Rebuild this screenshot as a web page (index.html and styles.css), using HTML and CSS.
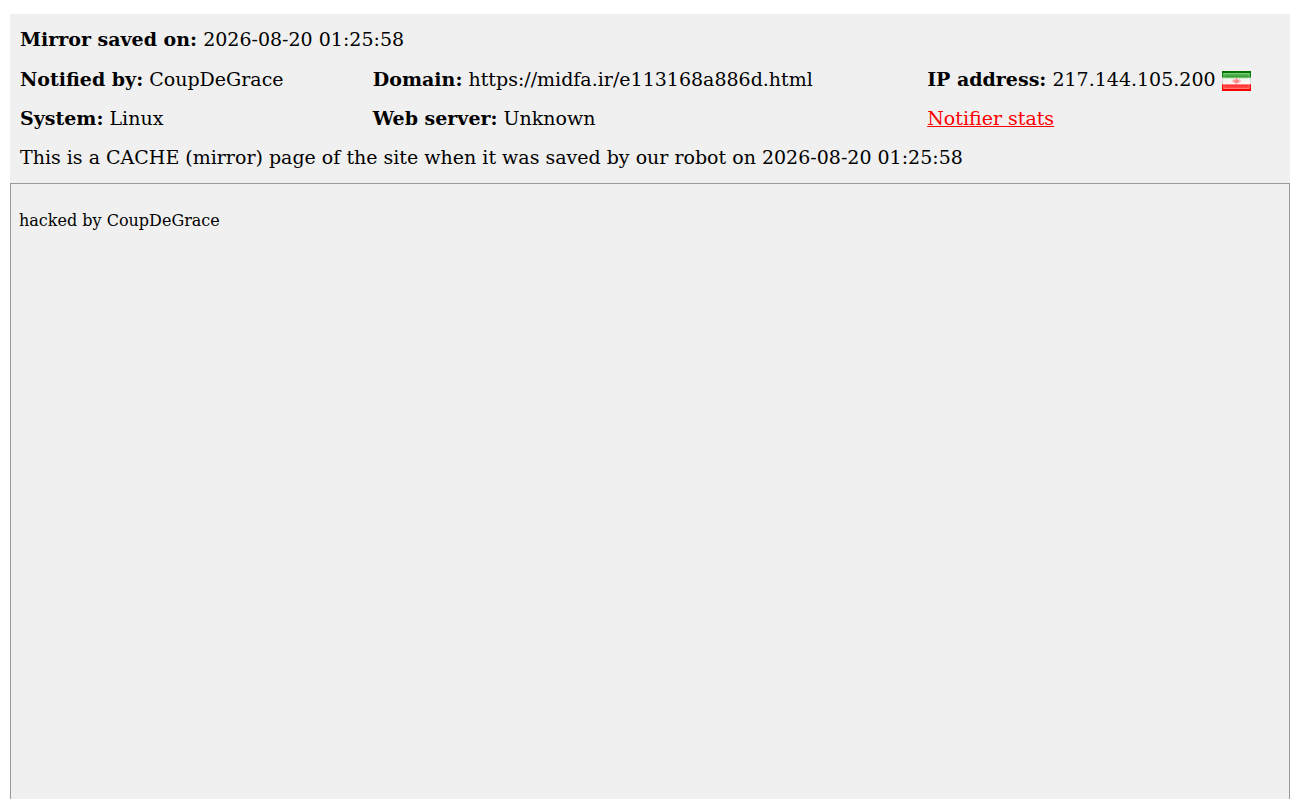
FILE: index.html
```html
<!DOCTYPE html>
<html lang="en">
<head>
<meta charset="utf-8">
<title>Mirror saved on: 2026-08-20 01:25:58</title>
<link rel="stylesheet" href="styles.css">
</head>
<body>
<header class="info">
  <p class="row wide saved"><strong>Mirror saved on:</strong> 2026-08-20 01:25:58</p>
  <p class="row"><strong>Notified by:</strong> CoupDeGrace</p>
  <p class="row"><strong>Domain:</strong> https://midfa.ir/e113168a886d.html</p>
  <p class="row"><strong>IP address:</strong> 217.144.105.200
    <svg class="flag" viewBox="0 0 29 20" role="img" aria-label="Iran">
      <defs>
        <linearGradient id="frame" x1="0" y1="0" x2="0" y2="1">
          <stop offset="0" stop-color="#007000"/>
          <stop offset=".28" stop-color="#0c880c"/>
          <stop offset=".38" stop-color="#dcdcdc"/>
          <stop offset=".62" stop-color="#dcdcdc"/>
          <stop offset=".7" stop-color="#f80000"/>
          <stop offset="1" stop-color="#f80000"/>
        </linearGradient>
        <linearGradient id="bands" x1="0" y1="0" x2="0" y2="1">
          <stop offset="0" stop-color="#5cbc5c"/>
          <stop offset=".14" stop-color="#4cb04c"/>
          <stop offset=".24" stop-color="#2c9c2c"/>
          <stop offset=".36" stop-color="#f0f8f0"/>
          <stop offset=".66" stop-color="#fff4f4"/>
          <stop offset=".76" stop-color="#ff3030"/>
          <stop offset="1" stop-color="#ff5858"/>
        </linearGradient>
      </defs>
      <path fill="url(#frame)" d="M0 0h29v20H0z"/>
      <path fill="url(#bands)" d="M1 2h27v16H1z"/>
      <path fill="none" stroke="#fff" stroke-opacity=".2" d="M2 2.500h25v15H2z"/>
      <path fill="#ffc4c4" d="M13 7h3v1h2v1h1v2h-1v1h-2v1h-3v-1h-2v-1h-1V9h1V8h2z"/>
      <path fill="#f88c8c" d="M14 7h1v2h2v2h-1v1h-3v-1h-1V9h2z"/>
    </svg>
  </p>
  <p class="row"><strong>System:</strong> Linux</p>
  <p class="row"><strong>Web server:</strong> Unknown</p>
  <p class="row"><a class="stats" href="#">Notifier stats</a></p>
  <p class="row wide">This is a CACHE (mirror) page of the site when it was saved by our robot on 2026-08-20 01:25:58</p>
</header>
<main class="mirror">
  <p class="message">hacked by CoupDeGrace</p>
</main>
</body>
</html>
```
FILE: styles.css
```css
* {
  box-sizing: border-box;
}

body {
  display: flex;
  flex-direction: column;
  min-height: 100vh;
  margin: 0;
  padding: 14px 10px 0;
  background: #fff;
  color: #000;
  font-family: "DejaVu Serif", serif;
  font-size: 16px;
}

.info {
  display: grid;
  grid-template-columns: 28% 44% 28%;
  padding: 6px 10px;
  background: #f0f0f0;
  font-size: 19px;
  line-height: 39px;
}

.row {
  margin: 0;
}

.wide {
  grid-column: 1 / -1;
}

.saved {
  padding-bottom: 1px;
}

.flag {
  width: 29px;
  height: 20px;
  vertical-align: -5px;
}

.stats {
  color: #f00;
}

.mirror {
  flex: 1;
  padding: 27px 8px;
  border: 1px solid #999;
  border-bottom: 0;
  background: #f0f0f0;
}

.message {
  margin: 0;
  line-height: 19px;
}
```
